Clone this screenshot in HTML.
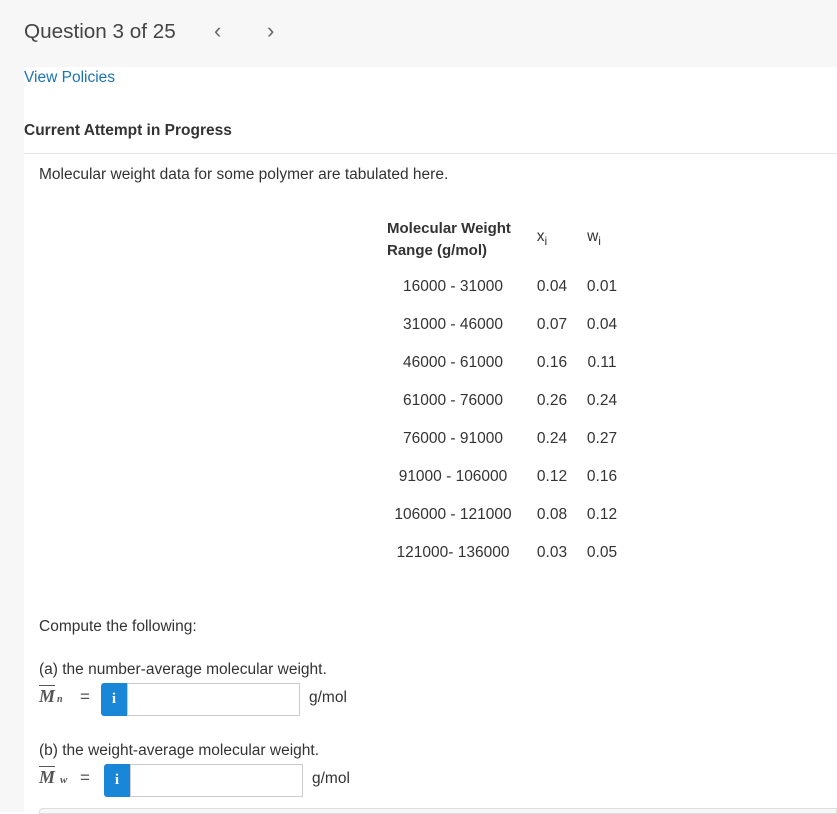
<!DOCTYPE html>
<html><head><meta charset="utf-8"><style>
*{margin:0;padding:0;box-sizing:border-box}
body{width:837px;height:812px;background:#fff;font-family:"Liberation Sans",sans-serif;color:#333;position:relative;overflow:hidden}
.a{position:absolute;white-space:nowrap}
.c{position:absolute;white-space:nowrap;transform:translateX(-50%)}
.t{font-size:15.5px;color:#333}
.box{position:absolute;height:33px;border:1px solid #ccc;background:#fff}
.ib{position:absolute;width:26px;height:33px;background:#1a86d8;border-radius:3px 0 0 3px;color:#fff;font-family:"Liberation Serif",serif;font-weight:bold;font-size:15px;text-align:center;line-height:33px}
.m{font-family:"Liberation Serif",serif;font-style:italic;font-weight:bold;font-size:18px;color:#555}
</style></head><body>
<div class="a" style="left:0;top:0;width:837px;height:67px;background:#f7f7f7"></div>
<div class="a" style="left:0;top:67px;width:24px;height:745px;background:#f7f7f7"></div>
<div class="a" style="left:24px;top:20px;font-size:20.7px;color:#444">Question 3 of 25</div>
<div class="a" style="left:214px;top:18px;font-size:22px;color:#666">&#8249;</div>
<div class="a" style="left:267px;top:18px;font-size:22px;color:#666">&#8250;</div>
<div class="a" style="left:24px;top:69px;font-size:15.5px;color:#1a73b5">View Policies</div>
<div class="a" style="left:24px;top:122px;font-size:15.5px;font-weight:bold;color:#333">Current Attempt in Progress</div>
<div class="a" style="left:24px;top:153px;width:813px;height:1px;background:#e6e6e6"></div>
<div class="a t" style="left:39px;top:166px">Molecular weight data for some polymer are tabulated here.</div>
<div class="a" style="left:387px;top:218px;font-size:15px;font-weight:bold;line-height:22px">Molecular Weight<br>Range (g/mol)</div>
<div class="c t" style="left:542px;top:228px">x<sub style="font-size:12px">i</sub></div>
<div class="c t" style="left:594px;top:228px">w<sub style="font-size:12px">i</sub></div>
<div class="c t" style="left:453px;top:278px">16000 - 31000</div><div class="c t" style="left:552px;top:278px">0.04</div><div class="c t" style="left:602px;top:278px">0.01</div>
<div class="c t" style="left:453px;top:316px">31000 - 46000</div><div class="c t" style="left:552px;top:316px">0.07</div><div class="c t" style="left:602px;top:316px">0.04</div>
<div class="c t" style="left:453px;top:354px">46000 - 61000</div><div class="c t" style="left:552px;top:354px">0.16</div><div class="c t" style="left:602px;top:354px">0.11</div>
<div class="c t" style="left:453px;top:392px">61000 - 76000</div><div class="c t" style="left:552px;top:392px">0.26</div><div class="c t" style="left:602px;top:392px">0.24</div>
<div class="c t" style="left:453px;top:430px">76000 - 91000</div><div class="c t" style="left:552px;top:430px">0.24</div><div class="c t" style="left:602px;top:430px">0.27</div>
<div class="c t" style="left:453px;top:468px">91000 - 106000</div><div class="c t" style="left:552px;top:468px">0.12</div><div class="c t" style="left:602px;top:468px">0.16</div>
<div class="c t" style="left:453px;top:506px">106000 - 121000</div><div class="c t" style="left:552px;top:506px">0.08</div><div class="c t" style="left:602px;top:506px">0.12</div>
<div class="c t" style="left:453px;top:544px">121000- 136000</div><div class="c t" style="left:552px;top:544px">0.03</div><div class="c t" style="left:602px;top:544px">0.05</div>
<div class="a t" style="left:39px;top:618px">Compute the following:</div>
<div class="a t" style="left:39px;top:661px">(a) the number-average molecular weight.</div>
<div class="a m" style="left:39px;top:686px;text-decoration:overline">M</div><div class="a m" style="left:57px;top:694px;font-size:10px">n</div>
<div class="a" style="left:80px;top:687px;font-size:17px;color:#555">=</div>
<div class="ib" style="left:101px;top:683px">i</div>
<div class="box" style="left:127px;top:683px;width:173px"></div>
<div class="a t" style="left:309px;top:689px">g/mol</div>
<div class="a t" style="left:39px;top:742px">(b) the weight-average molecular weight.</div>
<div class="a m" style="left:39px;top:767px;text-decoration:overline">M</div><div class="a m" style="left:60px;top:774px;font-size:11px">w</div>
<div class="a" style="left:80px;top:768px;font-size:17px;color:#555">=</div>
<div class="ib" style="left:104px;top:764px">i</div>
<div class="box" style="left:130px;top:764px;width:173px"></div>
<div class="a t" style="left:312px;top:770px">g/mol</div>
<div class="a" style="left:39px;top:808px;width:798px;height:6px;border:1px solid #ddd;border-radius:4px 0 0 0;background:#f8f8f8"></div>
</body></html>
